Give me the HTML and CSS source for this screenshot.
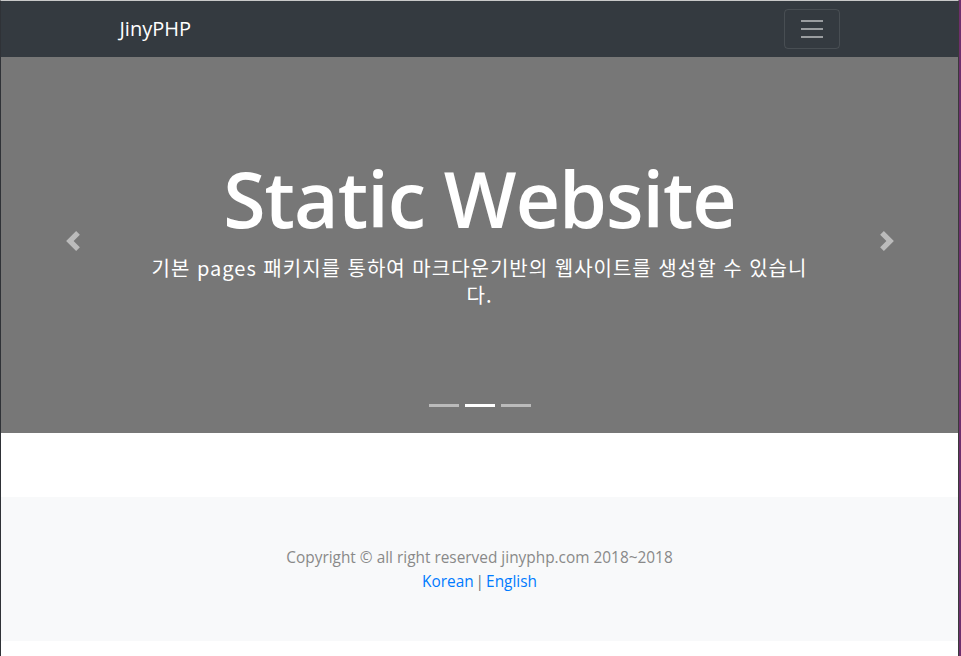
FILE: index.html
```html
<!DOCTYPE html>
<html lang="ko">
<head>
<meta charset="utf-8">
<title>JinyPHP</title>
<link rel="stylesheet" href="styles.css">
</head>
<body>
<div class="outer">
  <div class="frame">
    <nav class="navbar">
      <div class="nav-container">
        <a class="brand" href="#">JinyPHP</a>
        <button class="toggler" type="button" aria-label="Toggle navigation">
          <svg width="30" height="30" viewBox="0 0 30 30"><path stroke="rgba(255,255,255,0.5)" stroke-width="2" stroke-linecap="butt" d="M4 7h22M4 15h22M4 23h22"/></svg>
        </button>
      </div>
    </nav>

    <section class="carousel">
      <a class="control prev" href="#" aria-label="Previous">
        <svg width="20" height="20" viewBox="0 0 8 8"><path fill="#fff" d="M5.25 0l-4 4 4 4 1.5-1.5-2.5-2.5 2.5-2.5-1.5-1.5z"/></svg>
      </a>
      <div class="caption">
        <h1 class="title">Static Website</h1>
        <p class="lead">기본 pages 패키지를 통하여 마크다운기반의 웹사이트를 생성할 수 있습니다.</p>
      </div>
      <a class="control next" href="#" aria-label="Next">
        <svg width="20" height="20" viewBox="0 0 8 8"><path fill="#fff" d="M2.75 0l-1.5 1.5 2.5 2.5-2.5 2.5 1.5 1.5 4-4-4-4z"/></svg>
      </a>
      <ol class="indicators">
        <li></li>
        <li class="active"></li>
        <li></li>
      </ol>
    </section>

    <div class="spacer"></div>

    <footer class="footer">
      <p class="copy">Copyright © all right reserved jinyphp.com 2018~2018</p>
      <p class="langs"><a href="#">Korean</a> | <a href="#">English</a></p>
    </footer>

    <div class="bottom"></div>
  </div>
</div>
</body>
</html>
```

FILE: styles.css
```css
* { box-sizing: border-box; }

html, body {
  margin: 0;
  padding: 0;
  background: #ffffff;
}

body {
  font-family: "Open Sans", "Noto Sans CJK KR", sans-serif;
  font-size: 16px;
  line-height: 1.5;
  color: #212529;
}

.outer {
  width: 961px;
  height: 656px;
  overflow: hidden;
  border-right: 2px solid #6e2f6e;
}

.frame {
  border-top: 1px solid #c9c9c9;
  border-left: 1px solid #2f3237;
  border-right: 1px solid #3a3a3a;
  min-height: 656px;
}

.navbar {
  background: #343a40;
  height: 56px;
  display: flex;
  align-items: center;
}

.nav-container {
  width: 720px;
  margin: 0 auto;
  display: flex;
  align-items: center;
  justify-content: space-between;
}

.brand {
  color: #ffffff;
  text-decoration: none;
  font-size: 20px;
  line-height: 30px;
  padding: 5px 0;
}

.toggler {
  width: 56px;
  height: 40px;
  border: 1px solid rgba(255, 255, 255, 0.1);
  border-radius: 4px;
  background: transparent;
  display: flex;
  align-items: center;
  justify-content: center;
  padding: 0;
}

.toggler svg { display: block; }

.carousel {
  position: relative;
  height: 376px;
  background: #777777;
  display: flex;
  justify-content: center;
  align-items: flex-start;
}

.caption {
  width: 664px;
  text-align: center;
  color: #ffffff;
  padding-top: 94px;
}

.title {
  margin: 0;
  font-size: 77px;
  font-weight: 600;
  line-height: 96px;
  letter-spacing: -1px;
}

.lead {
  margin: 7px 0 0;
  font-size: 20px;
  line-height: 27px;
  letter-spacing: 1px;
  font-family: "Noto Sans CJK KR", "Open Sans", sans-serif;
}

.control {
  position: absolute;
  top: 0;
  bottom: 0;
  width: 143px;
  display: flex;
  align-items: center;
  justify-content: center;
  opacity: 0.5;
}

.control svg { display: block; margin-top: -8px; }

.prev { left: 0; }
.next { right: 0; }

.indicators {
  position: absolute;
  left: 0;
  right: 0;
  bottom: 26px;
  margin: 0;
  padding: 0;
  list-style: none;
  display: flex;
  justify-content: center;
  gap: 6px;
}

.indicators li {
  width: 30px;
  height: 3px;
  background: rgba(255, 255, 255, 0.5);
}

.indicators li.active {
  background: #ffffff;
}

.spacer {
  height: 64px;
}

.footer {
  background: #f8f9fa;
  padding: 49px 0 47px;
  text-align: center;
}

.footer p {
  margin: 0;
  line-height: 24px;
  font-size: 15.4px;
}

.copy {
  color: #898989;
}

.langs {
  color: #6c757d;
  word-spacing: -2px;
}

.langs a {
  color: #007bff;
  text-decoration: none;
  word-spacing: 0;
}

.bottom {
  height: 16px;
}
```
